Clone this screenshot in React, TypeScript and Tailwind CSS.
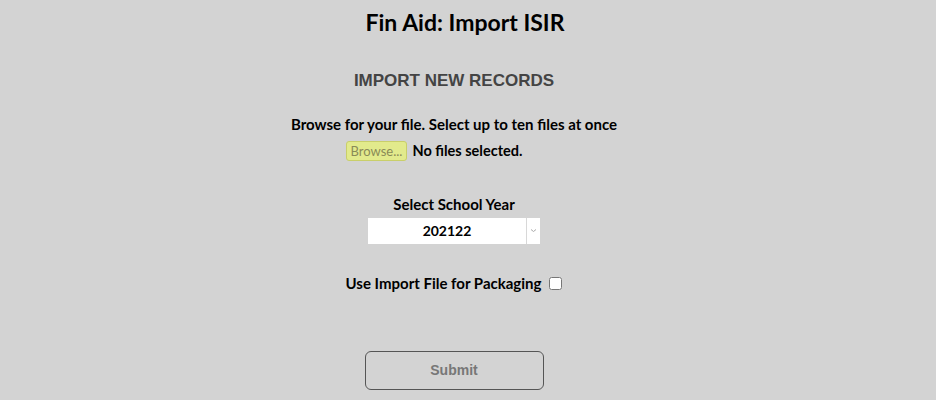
import React, { useState } from 'react';

const App: React.FC = () => {
  const [year, setYear] = useState('202122');
  const [useForPackaging, setUseForPackaging] = useState(false);

  return (
    <div className="w-[936px] h-[400px] overflow-hidden bg-[#d3d3d3] text-black" style={{ fontFamily: 'Lato, "Open Sans", sans-serif' }}>
      <div className="w-[908px] flex flex-col items-center">
        <h1 className="mt-[9px] pl-[22px] text-[23px] leading-[26px] font-bold">Fin Aid: Import ISIR</h1>

        <h2 className="mt-[36px] text-[17px] leading-[20px] font-bold text-[#444] font-['Liberation_Sans',Arial,sans-serif]">
          IMPORT NEW RECORDS
        </h2>

        <p className="mt-[24px] text-[15px] leading-[19px] font-bold">Browse for your file. Select up to ten files at once</p>

        <div className="mt-[6px] flex items-center gap-[5px] -ml-[40px]">
          <button className="h-[20px] px-[4px] text-[13px] leading-[18px] text-[#8a8a57] bg-[#e2ea8c] border border-[#c9cf6a] rounded-[3px]">
            Browse...
          </button>
          <span className="text-[14.5px] font-bold">No files selected.</span>
        </div>

        <label className="mt-[33px] text-[15px] leading-[18px] font-bold">Select School Year</label>

        <div className="mt-[5px] relative w-[172px] h-[26px] bg-white">
          <select
            value={year}
            onChange={(e) => setYear(e.target.value)}
            className="appearance-none w-full h-full bg-transparent text-center text-[14px] font-bold pr-[14px] outline-none"
          >
            <option value="202122">202122</option>
            <option value="202021">202021</option>
          </select>
          <div className="absolute right-0 top-0 h-full w-[14px] border-l border-[#d8d8d8] flex items-center justify-center pointer-events-none">
            <svg width="7" height="5" viewBox="0 0 7 5">
              <path d="M1 1.5 L3.5 3.5 L6 1.5" stroke="#aaa" strokeWidth="1" fill="none" />
            </svg>
          </div>
        </div>

        <div className="mt-[30px] flex items-center gap-[8px]">
          <span className="text-[15px] leading-[18px] font-bold">Use Import File for Packaging</span>
          <input
            type="checkbox"
            checked={useForPackaging}
            onChange={(e) => setUseForPackaging(e.target.checked)}
            className="w-[13px] h-[13px] mt-[2px]"
          />
        </div>

        <button className="mt-[59px] w-[179px] h-[39px] border border-[#555] rounded-[6px] text-[14px] font-bold text-[#777] font-['Liberation_Sans',Arial,sans-serif]">
          Submit
        </button>
      </div>
    </div>
  );
};

export default App;
